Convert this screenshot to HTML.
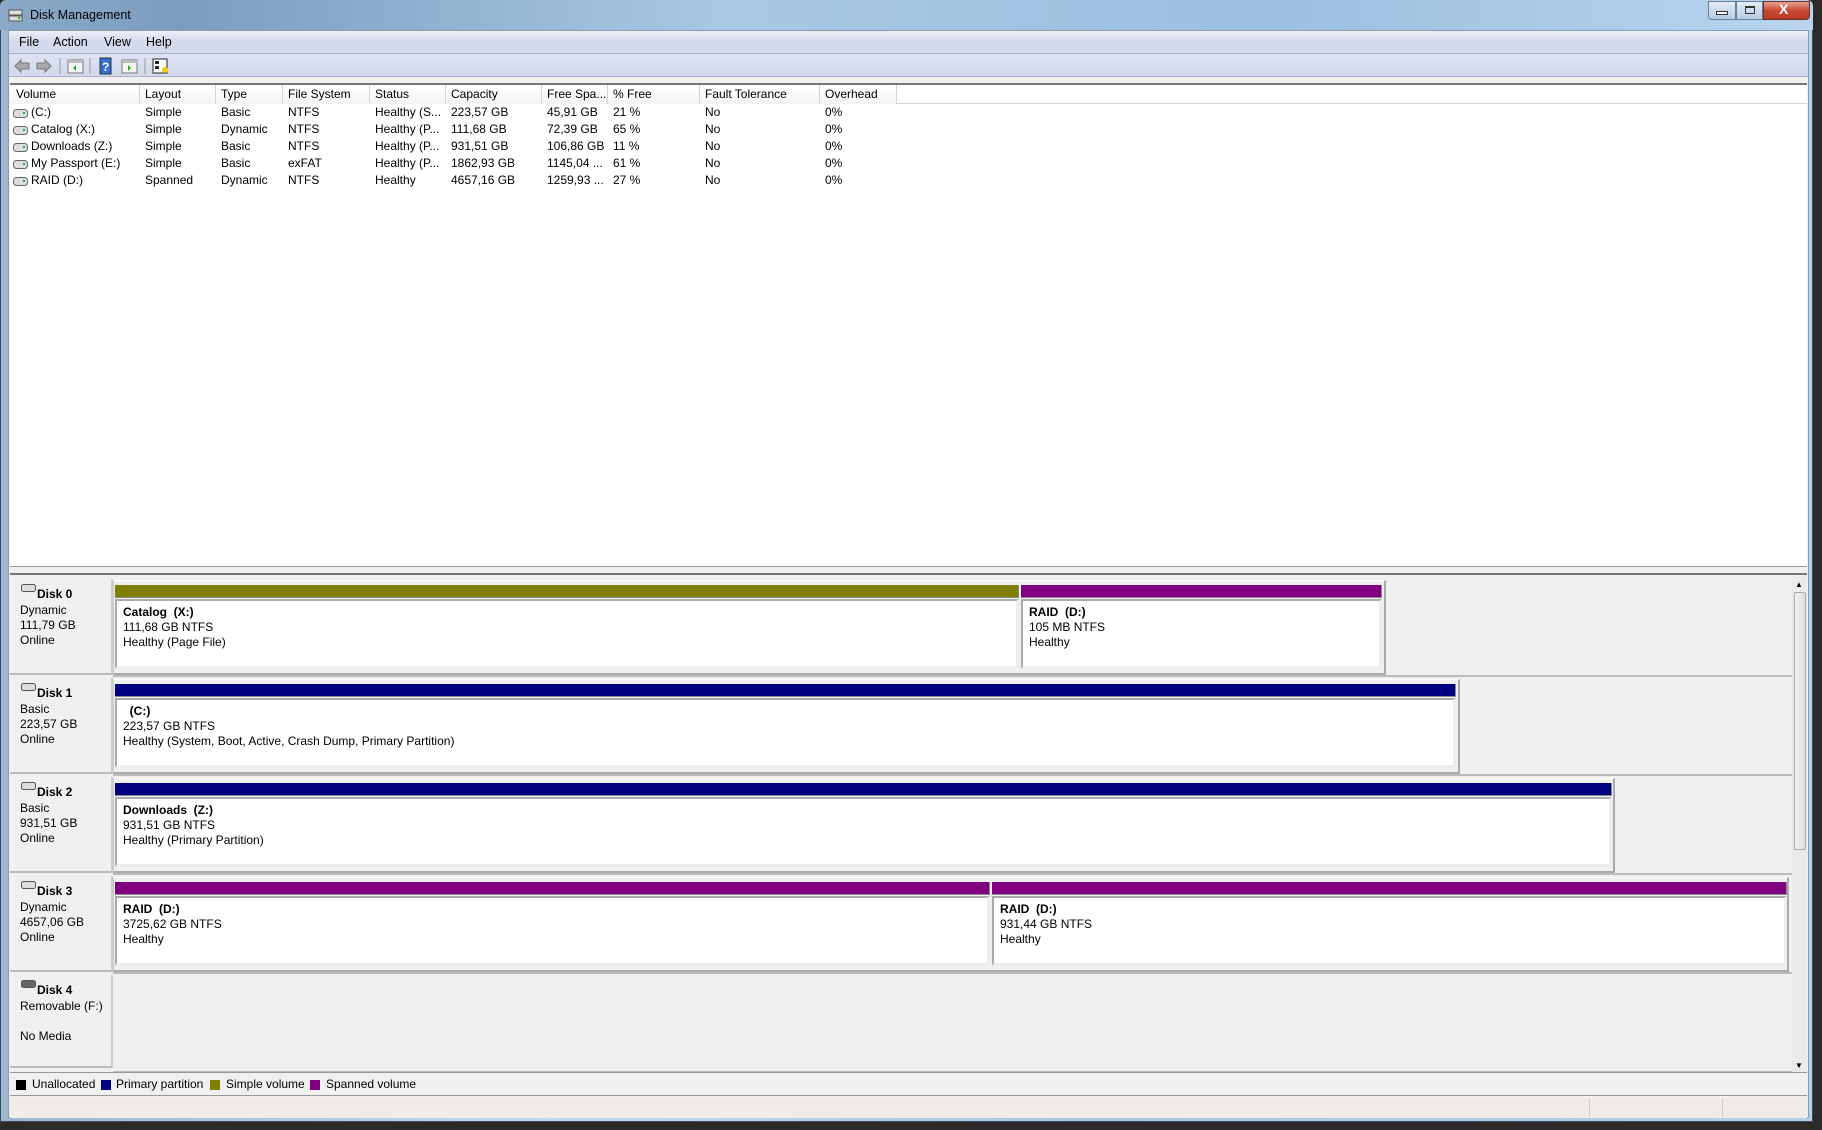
<!DOCTYPE html>
<html><head><meta charset="utf-8"><style>
*{margin:0;padding:0;box-sizing:border-box}
body{width:1822px;height:1130px;position:relative;overflow:hidden;background:#2a2a2a;font-family:"Liberation Sans",sans-serif;font-size:12px;color:#000}
.a{position:absolute}
.t{position:absolute;white-space:nowrap;font-size:12px;line-height:15px}
.b{font-weight:bold}
</style></head><body>
<!-- window frame -->
<div class="a" style="left:0;top:0;width:1813px;height:1122px;background:linear-gradient(90deg,#9db7d3,#c4d9ee 30%,#a9c6e4 60%,#b5d0ea);border:1px solid #3a4a5a;border-radius:6px 6px 0 0"></div>
<div class="a" style="left:0;top:0;width:1813px;height:30px;background:linear-gradient(90deg,#8aa9c8,#7c9dbf 10%,#a9c8e6 40%,#9dbfe0 70%,#b8d4ee);border-radius:6px 6px 0 0"></div>
<svg class="a" style="left:8px;top:8px" width="16" height="16"><rect x="1" y="2" width="13" height="5" fill="#ddd" stroke="#555"/><rect x="1" y="8" width="13" height="5" fill="#ddd" stroke="#555"/><rect x="10" y="9" width="2" height="2" fill="#3a3"/></svg>
<div class="t" style="left:30px;top:8px;font-size:12.5px">Disk Management</div>
<div class="a" style="left:1708px;top:1px;width:28px;height:19px;border:1px solid #6a7f96;border-radius:0 0 0 4px;background:linear-gradient(#e4edf7,#b6cbe2)"></div>
<div class="a" style="left:1716px;top:11px;width:12px;height:4px;border:1px solid #333;background:#fff"></div>
<div class="a" style="left:1736px;top:1px;width:27px;height:19px;border:1px solid #6a7f96;background:linear-gradient(#e4edf7,#b6cbe2)"></div>
<div class="a" style="left:1745px;top:6px;width:10px;height:8px;border:1px solid #333;border-top-width:2px"></div>
<div class="a" style="left:1763px;top:1px;width:47px;height:19px;border:1px solid #6a3030;border-radius:0 0 4px 0;background:linear-gradient(#e8a090,#c84a34 50%,#b83a24)"></div>
<div class="t b" style="left:1779px;top:2px;color:#fff;font-size:14px">X</div>
<!-- client -->
<div class="a" style="left:8px;top:30px;width:1801px;height:1088px;background:#f0f0f0;border:1px solid #8a9bb0"></div>
<div class="a" style="left:9px;top:31px;width:1799px;height:22px;background:linear-gradient(#eef1f9,#d6dcee 40%,#d3d9ec)"></div>
<div class="t" style="left:19px;top:35px;font-size:12.5px">File</div>
<div class="t" style="left:53px;top:35px;font-size:12.5px">Action</div>
<div class="t" style="left:104px;top:35px;font-size:12.5px">View</div>
<div class="t" style="left:146px;top:35px;font-size:12.5px">Help</div>
<div class="a" style="left:9px;top:53px;width:1799px;height:24px;background:linear-gradient(#dde3f3,#d2d9ec);border-top:1px solid #aab4c8;border-bottom:1px solid #aab4c8"></div>
<svg class="a" style="left:12px;top:57px" width="170" height="18">
<path d="M3 9 L9 3 L9 6 L17 6 L17 12 L9 12 L9 15 Z" fill="#aaa" stroke="#777"/>
<path d="M39 9 L33 3 L33 6 L25 6 L25 12 L33 12 L33 15 Z" fill="#aaa" stroke="#777"/>
<line x1="48" y1="1" x2="48" y2="17" stroke="#999"/>
<rect x="56" y="3" width="15" height="13" fill="#f4f4f4" stroke="#777"/><rect x="56" y="3" width="15" height="3" fill="#bbb"/><path d="M64 8 L61 11 L64 14Z" fill="#2a2"/>
<line x1="78" y1="1" x2="78" y2="17" stroke="#999"/>
<rect x="88" y="1" width="11" height="16" fill="#3a6fd0" stroke="#234"/><text x="90" y="14" fill="#fff" font-size="12" font-weight="bold" font-family="Liberation Sans">?</text>
<rect x="110" y="3" width="15" height="13" fill="#f4f4f4" stroke="#777"/><rect x="110" y="3" width="15" height="3" fill="#bbb"/><path d="M116 8 L119 11 L116 14Z" fill="#2a2"/>
<line x1="133" y1="1" x2="133" y2="17" stroke="#999"/>
<rect x="141" y="2" width="14" height="14" fill="#fff" stroke="#222"/><rect x="143" y="4" width="4" height="3" fill="#222"/><rect x="143" y="9" width="4" height="3" fill="#222"/><circle cx="153" cy="13" r="3" fill="#f0d000"/>
</svg>
<!-- list pane -->
<div class="a" style="left:10px;top:83px;width:1797px;height:484px;background:#fff;border-top:2px solid #777;border-bottom:1px solid #999"></div>
<div class="a" style="left:10px;top:85px;width:1797px;height:19px;background:#fff;border-bottom:1px solid #d5d5d5"></div>
<div class="a" style="left:11px;top:85px;width:885px;height:19px;background:linear-gradient(#fff,#f3f3f3)"></div>
<div id="hdr"></div>
<!-- graphical pane -->
<div class="a" style="left:10px;top:573px;width:1797px;height:2px;background:#777"></div>
<div class="a" style="left:1792px;top:576px;width:15px;height:496px;background:#eaeaea"></div>
<div class="a" style="left:1794px;top:592px;width:12px;height:258px;background:linear-gradient(90deg,#f4f4f4,#dcdcdc);border:1px solid #aaa;border-radius:2px"></div>
<div class="t" style="left:1795px;top:577px;font-size:8px">▲</div>
<div class="t" style="left:1795px;top:1058px;font-size:8px">▼</div>
<div id="disks"></div>
<!-- legend -->
<div class="a" style="left:10px;top:1072px;width:1797px;height:1px;background:#999"></div>
<div class="a" style="left:16px;top:1080px;width:10px;height:10px;background:#000"></div><div class="t" style="left:32px;top:1077px">Unallocated</div>
<div class="a" style="left:101px;top:1080px;width:10px;height:10px;background:#000080"></div><div class="t" style="left:116px;top:1077px">Primary partition</div>
<div class="a" style="left:210px;top:1080px;width:10px;height:10px;background:#808000"></div><div class="t" style="left:226px;top:1077px">Simple volume</div>
<div class="a" style="left:310px;top:1080px;width:10px;height:10px;background:#800080"></div><div class="t" style="left:326px;top:1077px">Spanned volume</div>
<div class="a" style="left:10px;top:1095px;width:1797px;height:1px;background:#999"></div>
<div class="a" style="left:10px;top:1098px;width:1797px;height:20px;background:#efecea"></div>
<div class="a" style="left:1589px;top:1099px;width:1px;height:18px;background:#ccc"></div>
<div class="a" style="left:1722px;top:1099px;width:1px;height:18px;background:#ccc"></div>
<script>
var cols=[[11,'Volume'],[140,'Layout'],[216,'Type'],[283,'File System'],[370,'Status'],[446,'Capacity'],[542,'Free Spa...'],[608,'% Free'],[700,'Fault Tolerance'],[820,'Overhead'],[897,'']];
var h='';
for(var i=0;i<cols.length;i++){h+='<div class="t" style="left:'+(cols[i][0]+5)+'px;top:87px">'+cols[i][1]+'</div>';if(i>0)h+='<div class="a" style="left:'+(cols[i][0]-1)+'px;top:85px;width:1px;height:19px;background:#d5d5d5"></div>';}
var rows=[[' (C:)','Simple','Basic','NTFS','Healthy (S...','223,57 GB','45,91 GB','21 %'],['Catalog (X:)','Simple','Dynamic','NTFS','Healthy (P...','111,68 GB','72,39 GB','65 %'],['Downloads (Z:)','Simple','Basic','NTFS','Healthy (P...','931,51 GB','106,86 GB','11 %'],['My Passport (E:)','Simple','Basic','exFAT','Healthy (P...','1862,93 GB','1145,04 ...','61 %'],['RAID (D:)','Spanned','Dynamic','NTFS','Healthy','4657,16 GB','1259,93 ...','27 %']];
for(var r=0;r<rows.length;r++){var y=105+r*17;
h+='<svg class="a" style="left:13px;top:'+(y+4)+'px" width="15" height="9"><rect x="0.5" y="0.5" width="14" height="8" rx="3" fill="#ddd" stroke="#666"/><rect x="10" y="3" width="2" height="2" fill="#3a3"/></svg>';
h+='<div class="t" style="left:31px;top:'+y+'px">'+rows[r][0]+'</div>';
for(var c=1;c<8;c++)h+='<div class="t" style="left:'+(cols[c][0]+5)+'px;top:'+y+'px">'+rows[r][c]+'</div>';
h+='<div class="t" style="left:705px;top:'+y+'px">No</div><div class="t" style="left:825px;top:'+y+'px">0%</div>';}
document.getElementById('hdr').innerHTML=h;
var disks=[['Disk 0','Dynamic','111,79 GB','Online',[[115,1019,'#808000','Catalog  (X:)','111,68 GB NTFS','Healthy (Page File)'],[1021,1382,'#800080','RAID  (D:)','105 MB NTFS','Healthy']],1386],
['Disk 1','Basic','223,57 GB','Online',[[115,1456,'#000080','  (C:)','223,57 GB NTFS','Healthy (System, Boot, Active, Crash Dump, Primary Partition)']],1460],
['Disk 2','Basic','931,51 GB','Online',[[115,1612,'#000080','Downloads  (Z:)','931,51 GB NTFS','Healthy (Primary Partition)']],1615],
['Disk 3','Dynamic','4657,06 GB','Online',[[115,990,'#800080','RAID  (D:)','3725,62 GB NTFS','Healthy'],[992,1787,'#800080','RAID  (D:)','931,44 GB NTFS','Healthy']],1789],
['Disk 4','Removable (F:)','','No Media',[],0]];
var d='';
for(var k=0;k<disks.length;k++){var D=disks[k],T=579+k*99;
d+='<div class="a" style="left:10px;top:'+T+'px;width:103px;height:'+(k==4?93:96)+'px;background:#f0f0f0;border-right:2px solid #ccc;border-bottom:2px solid #bbb"></div>';
d+='<svg class="a" style="left:21px;top:'+(T+5)+'px" width="15" height="9"><rect x="0.5" y="0.5" width="14" height="7" rx="2" fill="'+(k==4?'#666':'#ddd')+'" stroke="#555"/></svg>';
d+='<div class="t b" style="left:37px;top:'+(T+8)+'px">'+D[0]+'</div>';
d+='<div class="t" style="left:20px;top:'+(T+24)+'px">'+D[1]+'</div><div class="t" style="left:20px;top:'+(T+39)+'px">'+D[2]+'</div><div class="t" style="left:20px;top:'+(T+54)+'px">'+D[3]+'</div>';
if(k<4){d+='<div class="a" style="left:113px;top:'+(T+1)+'px;width:'+(D[5]-113)+'px;height:95px;border:2px solid #aaa;border-left:1px solid #ccc;border-top:1px solid #fff"></div>';}
d+='<div class="a" style="left:113px;top:'+(T+96)+'px;width:1679px;height:2px;background:#bbb"></div>';
for(var p=0;p<D[4].length;p++){var P=D[4][p];
d+='<div class="a" style="left:'+P[0]+'px;top:'+(T+6)+'px;width:'+(P[1]-P[0])+'px;height:13px;background:'+P[2]+';border-right:1px solid #888;border-bottom:1px solid #888"></div>';
d+='<div class="a" style="left:'+P[0]+'px;top:'+(T+20)+'px;width:'+(P[1]-P[0])+'px;height:70px;background:#fff;border:2px solid #aaa;border-right:3px solid #eee;border-bottom:3px solid #eee"></div>';
d+='<div class="t b" style="left:'+(P[0]+8)+'px;top:'+(T+26)+'px">'+P[3].replace(/ /g,'&nbsp;')+'</div><div class="t" style="left:'+(P[0]+8)+'px;top:'+(T+41)+'px">'+P[4]+'</div><div class="t" style="left:'+(P[0]+8)+'px;top:'+(T+56)+'px">'+P[5]+'</div>';}}
document.getElementById('disks').innerHTML=d;
</script>
</body></html>
